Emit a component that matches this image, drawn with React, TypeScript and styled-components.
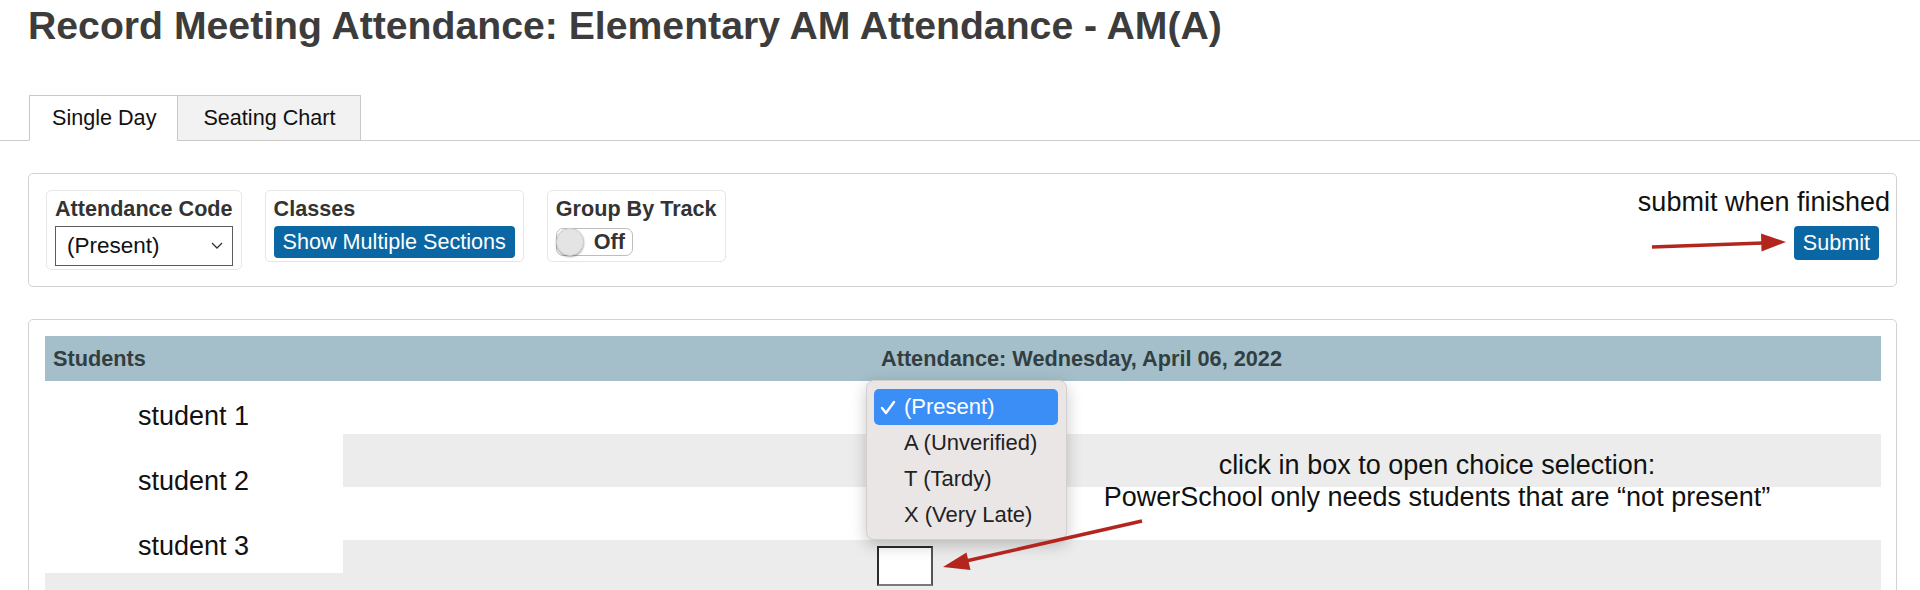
import styled, { createGlobalStyle } from 'styled-components'

const GlobalStyle = createGlobalStyle`
    html, body {
        margin: 0;
        padding: 0;
        background: #fff;
    }
    body {
        font-family: 'Liberation Sans', Arial, sans-serif;
        color: #222;
        overflow: hidden;
    }
`

const students = ['student 1', 'student 2', 'student 3']
const codes = ['(Present)', 'A (Unverified)', 'T (Tardy)', 'X (Very Late)']
const rows = [0, 1, 2, 3, 4]

const App = () => {
    return (
        <Page>
            <GlobalStyle />
            <Title>Record Meeting Attendance: Elementary AM Attendance - AM(A)</Title>

            <TabBar>
                <Tab $active>Single Day</Tab>
                <Tab $pad={25}>Seating Chart</Tab>
            </TabBar>

            <Toolbar>
                <Field>
                    <Label>Attendance Code</Label>
                    <SelectBox>
                        <span>(Present)</span>
                        <svg width="12" height="8" viewBox="0 0 12 8">
                            <polyline points="1,1 6,6 11,1" fill="none" stroke="#333" strokeWidth="1.3" />
                        </svg>
                    </SelectBox>
                </Field>
                <Field>
                    <Label>Classes</Label>
                    <BlueButton>Show Multiple Sections</BlueButton>
                </Field>
                <Field>
                    <Label>Group By Track</Label>
                    <ToggleRow>
                        <Toggle>
                            <Knob />
                            <ToggleText>Off</ToggleText>
                        </Toggle>
                    </ToggleRow>
                </Field>
                <SubmitButton>Submit</SubmitButton>
            </Toolbar>

            <Panel>
                <HeaderRow>
                    <HeadCell>Students</HeadCell>
                    <HeadCell>Attendance: Wednesday, April 06, 2022</HeadCell>
                </HeaderRow>
                {rows.map((r) => (
                    <Row key={r} $striped={r % 2 === 1}>
                        <Cell />
                        <Cell>{r === 3 && <ChoiceBox />}</Cell>
                    </Row>
                ))}
            </Panel>

            {/* pasted-over names and the open select menu */}
            <NamePatch>
                {students.map((s) => (
                    <div key={s}>{s}</div>
                ))}
            </NamePatch>

            <Menu>
                {codes.map((c, i) => (
                    <MenuItem key={c} $selected={i === 0}>
                        {i === 0 && (
                            <Check width="16" height="15" viewBox="0 0 16 15">
                                <polyline points="2,8 6,13 14,2" fill="none" stroke="#fff" strokeWidth="2.4" strokeLinecap="round" strokeLinejoin="round" />
                            </Check>
                        )}
                        {c}
                    </MenuItem>
                ))}
            </Menu>

            <SubmitNote>submit when finished</SubmitNote>
            <BoxNote>
                click in box to open choice selection:
                <br />
                PowerSchool only needs students that are “not present”
            </BoxNote>

            <Arrows width="1920" height="590" viewBox="0 0 1920 590">
                <line x1="1652" y1="247" x2="1763" y2="243" stroke="#b3261e" strokeWidth="3.5" />
                <polygon points="1786,242 1761,233.5 1761.5,251.5" fill="#b3261e" />
                <line x1="1142" y1="521" x2="966" y2="561" stroke="#b3261e" strokeWidth="3.5" />
                <polygon points="943,567 970.5,570 966.5,552.5" fill="#b3261e" />
            </Arrows>
        </Page>
    )
}

const Page = styled.div`
    position: relative;
    width: 1920px;
    height: 590px;
    box-sizing: border-box;
    padding: 3px 23px 0 28px;
    overflow: hidden;
`

const Title = styled.h1`
    margin: 0;
    font-size: 39.2px;
    line-height: 46px;
    font-weight: bold;
    color: #3c3c3c;
    white-space: nowrap;
`

const TabBar = styled.div`
    display: flex;
    height: 45px;
    margin: 46px -23px 0 -28px;
    padding-left: 29px;
    border-bottom: 1px solid #cccccc;
`

const Tab = styled.div<{ $active?: boolean; $pad?: number }>`
    box-sizing: border-box;
    height: 46px;
    padding: 0 ${(p) => (p.$pad ?? 21)}px 0 ${(p) => (p.$pad ?? 22)}px;
    display: flex;
    align-items: center;
    font-size: 21.6px;
    color: #111;
    background: ${(p) => (p.$active ? '#fff' : '#f2f2f2')};
    border: 1px solid #c9c9c9;
    border-bottom-color: ${(p) => (p.$active ? '#fff' : '#c9c9c9')};
    margin-right: -1px;
`

const Toolbar = styled.div`
    margin-top: 32px;
    display: flex;
    align-items: flex-start;
    gap: 23px;
    padding: 16px 17px 16px 17px;
    border: 1px solid #d2d2d2;
    border-radius: 5px;
`

const Field = styled.div`
    display: flex;
    flex-direction: column;
    gap: 4px;
    padding: 5px 8px 3px 8px;
    border: 1px solid #e6e6e6;
    border-radius: 5px;
`

const Label = styled.div`
    font-size: 21.6px;
    line-height: 26px;
    font-weight: bold;
    color: #333;
    white-space: nowrap;
`

const SelectBox = styled.div`
    box-sizing: border-box;
    height: 40px;
    display: flex;
    align-items: center;
    justify-content: space-between;
    padding: 0 9px 0 11px;
    border: 1px solid #5c5c5c;
    font-size: 22.5px;
    color: #111;
`

const BlueButton = styled.div`
    height: 32px;
    display: flex;
    align-items: center;
    padding: 0 9px;
    background: #0a67a3;
    color: #fff;
    font-size: 21.6px;
    border-radius: 4px;
    white-space: nowrap;
`

const ToggleRow = styled.div`
    height: 32px;
    display: flex;
    align-items: center;
`

const Toggle = styled.div`
    box-sizing: border-box;
    width: 77px;
    height: 28px;
    display: flex;
    align-items: center;
    border: 1px solid #bdbdbd;
    border-radius: 7px;
    background: #fff;
`

const Knob = styled.div`
    box-sizing: border-box;
    width: 28px;
    height: 28px;
    margin-left: -1px;
    border-radius: 50%;
    background: #e4e4e4;
    border: 1px solid #cfcfcf;
    box-shadow: 0 1px 2px rgba(0, 0, 0, 0.35);
`

const ToggleText = styled.span`
    margin-left: 10px;
    font-size: 21.6px;
    font-weight: bold;
    color: #333;
`

const SubmitButton = styled(BlueButton)`
    margin-left: auto;
    margin-top: 36px;
    height: 34px;
`

const Panel = styled.div`
    margin-top: 32px;
    padding: 16px 15px 0 16px;
    border: 1px solid #d2d2d2;
    border-radius: 5px;
`

const HeaderRow = styled.div`
    display: grid;
    grid-template-columns: 828px 1fr;
    height: 45px;
    background: #a4bfc9;
`

const HeadCell = styled.div`
    display: flex;
    align-items: center;
    padding: 0 8px;
    font-size: 21.7px;
    font-weight: bold;
    color: #323e42;
`

const Row = styled.div<{ $striped: boolean }>`
    display: grid;
    grid-template-columns: 828px 1fr;
    height: 53px;
    background: ${(p) => (p.$striped ? '#ececec' : '#fff')};
`

const Cell = styled.div`
    padding: 6px 4px;
`

const ChoiceBox = styled.div`
    box-sizing: border-box;
    width: 56px;
    height: 40px;
    background: #fff;
    border: 2px solid #2b2b2b;
    border-right-color: #555;
    border-bottom-color: #7a7a7a;
`

const NamePatch = styled.div`
    position: absolute;
    left: 45px;
    top: 381px;
    width: 298px;
    height: 192px;
    box-sizing: border-box;
    padding: 3px 0 0 93px;
    background: #fff;
    font-size: 27px;
    line-height: 65px;
    color: #111;
`

const Menu = styled.div`
    position: absolute;
    left: 866px;
    top: 380px;
    width: 201px;
    box-sizing: border-box;
    padding: 8px 8px 6px 7px;
    background: #ebe6e6;
    border: 1px solid #d4cfcf;
    border-radius: 8px;
    box-shadow: 0 5px 16px rgba(0, 0, 0, 0.22);
`

const MenuItem = styled.div<{ $selected: boolean }>`
    position: relative;
    height: 36px;
    line-height: 36px;
    padding-left: 30px;
    font-size: 22px;
    color: ${(p) => (p.$selected ? '#fff' : '#222')};
    background: ${(p) => (p.$selected ? '#3b8ef5' : 'transparent')};
    border-radius: 5px;
    white-space: nowrap;
`

const Check = styled.svg`
    position: absolute;
    left: 6px;
    top: 11px;
`

const SubmitNote = styled.div`
    position: absolute;
    right: 30px;
    top: 186px;
    font-size: 27px;
    line-height: 32px;
    color: #111;
    white-space: nowrap;
`

const BoxNote = styled.div`
    position: absolute;
    left: 1097px;
    top: 449px;
    width: 680px;
    text-align: center;
    font-size: 27px;
    line-height: 32px;
    color: #111;
    white-space: nowrap;
`

const Arrows = styled.svg`
    position: absolute;
    left: 0;
    top: 0;
    pointer-events: none;
`

export default App
